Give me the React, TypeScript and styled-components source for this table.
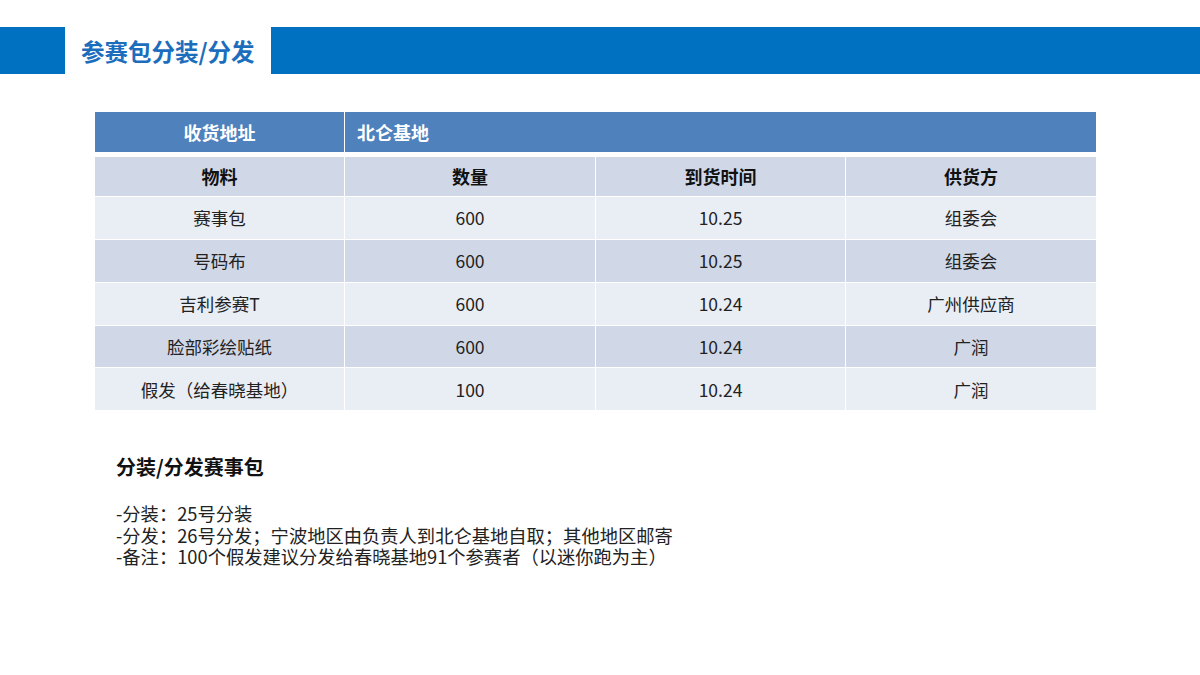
import { FC } from 'react';
import styled, { createGlobalStyle } from 'styled-components';

const GlobalStyle = createGlobalStyle`
  html, body {
    margin: 0;
    padding: 0;
    background: #ffffff;
  }
  body {
    font-family: "Noto Sans CJK SC", "Noto Sans", sans-serif;
    color: #222222;
  }
`;

const STPage = styled.div`
  width: 1200px;
  height: 675px;
  overflow: hidden;
  background: #ffffff;
  padding-top: 27px;
  box-sizing: border-box;
`;

const STHeaderBar = styled.div`
  display: flex;
  height: 47px;
`;

const STBlueBlock = styled.div<{ $grow?: boolean }>`
  background: #0070c0;
  width: ${(p) => (p.$grow ? 'auto' : '65px')};
  flex: ${(p) => (p.$grow ? '1' : 'none')};
`;

const STTitle = styled.h1`
  width: 206px;
  margin: 0;
  padding: 0 0 0 16px;
  box-sizing: border-box;
  display: flex;
  align-items: center;
  font-size: 23.5px;
  font-weight: bold;
  color: #1d6dbd;
  white-space: nowrap;
`;

const STTable = styled.table`
  margin: 38px 0 0 94px;
  width: 1002px;
  border-collapse: collapse;
  table-layout: fixed;
  font-size: 17.5px;
`;

const STCell = styled.td<{ $bg: string; $bold?: boolean; $left?: boolean; $color?: string }>`
  background: ${(p) => p.$bg};
  color: ${(p) => p.$color || '#222222'};
  font-weight: ${(p) => (p.$bold ? 'bold' : 'normal')};
  font-size: ${(p) => (p.$bold ? '18px' : '17.5px')};
  text-align: ${(p) => (p.$left ? 'left' : 'center')};
  padding: ${(p) => (p.$left ? '0 0 0 12px' : '0')};
  height: 42.8px;
  border: 1.5px solid #ffffff;
  box-sizing: border-box;
  line-height: 1;
`;

const STTopRow = styled.tr`
  td {
    height: 42px;
    border-bottom: 5px solid #ffffff;
    border-top: none;
  }
`;

const STNotes = styled.div`
  margin: 41px 0 0 116px;
`;

const STNotesTitle = styled.h2`
  margin: 0 0 22px 0;
  font-size: 20px;
  font-weight: bold;
  color: #111111;
`;

const STNoteLine = styled.p`
  margin: 0;
  font-size: 18.3px;
  line-height: 21.5px;
  color: #222222;
  white-space: nowrap;
`;

interface Row {
  name: string;
  qty: string;
  date: string;
  vendor: string;
}

const rows: Row[] = [
  { name: '赛事包', qty: '600', date: '10.25', vendor: '组委会' },
  { name: '号码布', qty: '600', date: '10.25', vendor: '组委会' },
  { name: '吉利参赛T', qty: '600', date: '10.24', vendor: '广州供应商' },
  { name: '脸部彩绘贴纸', qty: '600', date: '10.24', vendor: '广润' },
  { name: '假发（给春晓基地）', qty: '100', date: '10.24', vendor: '广润' },
];

const DARK = '#d0d8e8';
const LIGHT = '#e9edf4';
const HEAD = '#4f81bd';

const App: FC = () => {
  return (
    <>
      <GlobalStyle />
      <STPage>
        <STHeaderBar>
          <STBlueBlock />
          <STTitle>参赛包分装/分发</STTitle>
          <STBlueBlock $grow />
        </STHeaderBar>

        <STTable>
          <colgroup>
            <col style={{ width: '250px' }} />
            <col style={{ width: '251px' }} />
            <col style={{ width: '250px' }} />
            <col style={{ width: '251px' }} />
          </colgroup>
          <tbody>
            <STTopRow>
              <STCell $bg={HEAD} $bold $color="#ffffff">
                收货地址
              </STCell>
              <STCell $bg={HEAD} $bold $left $color="#ffffff" colSpan={3}>
                北仑基地
              </STCell>
            </STTopRow>
            <tr>
              <STCell $bg={DARK} $bold $color="#111111">物料</STCell>
              <STCell $bg={DARK} $bold $color="#111111">数量</STCell>
              <STCell $bg={DARK} $bold $color="#111111">到货时间</STCell>
              <STCell $bg={DARK} $bold $color="#111111">供货方</STCell>
            </tr>
            {rows.map((r, i) => {
              const bg = i % 2 === 0 ? LIGHT : DARK;
              return (
                <tr key={r.name}>
                  <STCell $bg={bg}>{r.name}</STCell>
                  <STCell $bg={bg}>{r.qty}</STCell>
                  <STCell $bg={bg}>{r.date}</STCell>
                  <STCell $bg={bg}>{r.vendor}</STCell>
                </tr>
              );
            })}
          </tbody>
        </STTable>

        <STNotes>
          <STNotesTitle>分装/分发赛事包</STNotesTitle>
          <STNoteLine>-分装：25号分装</STNoteLine>
          <STNoteLine>-分发：26号分发；宁波地区由负责人到北仑基地自取；其他地区邮寄</STNoteLine>
          <STNoteLine>-备注：100个假发建议分发给春晓基地91个参赛者（以迷你跑为主）</STNoteLine>
        </STNotes>
      </STPage>
    </>
  );
};

export default App;
